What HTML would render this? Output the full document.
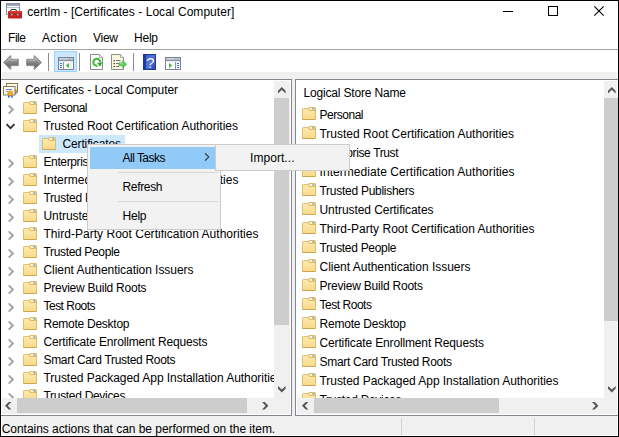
<!DOCTYPE html>
<html><head><meta charset="utf-8"><title>certlm</title>
<style>
html,body{margin:0;padding:0;background:#fff;}
body{width:619px;height:437px;position:relative;overflow:hidden;font-family:"Liberation Sans", sans-serif;}
.r{position:absolute;}
.t{position:absolute;white-space:pre;}
.ic{position:absolute;display:block;overflow:visible;}
.clip{position:absolute;overflow:hidden;}
</style></head><body>

<div class="r" style="left:0px;top:0px;width:619px;height:437px;background:#000;"></div>
<div class="r" style="left:1px;top:1px;width:617px;height:435px;background:#fff;"></div>
<svg class="ic" style="left:3px;top:2px" width="17" height="17" viewBox="0 0 17 17">
<rect x="3.5" y="1.5" width="13" height="11" fill="#fff" stroke="#8C93A3"/><rect x="4" y="2" width="12" height="2" fill="#9AA3B8"/><rect x="4" y="5" width="12" height="1" fill="#B8BFCE"/>
<path d="M7.5 10V9Q7.500 7.500 9 7.500H12Q13.500 7.500 13.500 9V10" fill="none" stroke="#333" stroke-width="1"/>
<rect x="5" y="9" width="14" height="7.500" rx=".8" fill="#C8201E"/><rect x="5.500" y="9.300" width="13" height="1.400" fill="#E0403A"/>
<rect x="8" y="11.500" width="1.500" height="2.500" fill="#ddd" stroke="#555" stroke-width=".4"/><rect x="14" y="11.500" width="1.500" height="2.500" fill="#ddd" stroke="#555" stroke-width=".4"/>
</svg>
<span class="t" style="left:27.3px;top:5.84px;font-size:12px;line-height:12px;color:#000;letter-spacing:0.041px;">certlm - [Certificates - Local Computer]</span>
<div class="r" style="left:503px;top:11px;width:10px;height:1px;background:#000;"></div>
<div class="r" style="left:548px;top:6px;width:8px;height:8px;border:1px solid #000"></div>
<svg class="ic" style="left:594px;top:6px" width="10" height="10" viewBox="0 0 10 10"><path d="M.3 .3L9.700 9.700M9.700 .3L.3 9.700" stroke="#000" stroke-width="1.1" fill="none"/></svg>
<span class="t" style="left:8px;top:32.34px;font-size:12px;line-height:12px;color:#000;letter-spacing:-0.449px;">File</span>
<span class="t" style="left:42px;top:32.34px;font-size:12px;line-height:12px;color:#000;letter-spacing:0.328px;">Action</span>
<span class="t" style="left:93px;top:32.34px;font-size:12px;line-height:12px;color:#000;letter-spacing:-0.266px;">View</span>
<span class="t" style="left:134px;top:32.34px;font-size:12px;line-height:12px;color:#000;letter-spacing:-0.230px;">Help</span>
<div class="r" style="left:1px;top:49px;width:617px;height:1px;background:#A0A0A0;"></div>
<div class="r" style="left:2px;top:72px;width:615px;height:7px;background:#F0F0F0;"></div>
<svg class="ic" style="left:3px;top:55px" width="16" height="15" viewBox="0 0 16 15"><defs><linearGradient id="ga" x1="0" y1="0" x2="0" y2="1"><stop offset="0" stop-color="#B8B8B8"/><stop offset=".45" stop-color="#8A8A8A"/><stop offset=".75" stop-color="#6E6E6E"/><stop offset="1" stop-color="#A8A8A8"/></linearGradient></defs><path d="M.6 7.400L7.400 .7H7.800V4.300H15.300V10.600H7.800V14.300H7.400z" fill="url(#ga)" stroke="#838383" stroke-width=".9" stroke-linejoin="round"/><path d="M2.300 7.400L6.800 3V5.300H14.300" fill="none" stroke="#C4C4C4" stroke-width=".7"/></svg>
<svg class="ic" style="left:26px;top:55px" width="16" height="15" viewBox="0 0 16 15"><path d="M15.400 7.400L8.600 .7H8.200V4.300H.7V10.600H8.200V14.300H8.600z" fill="url(#ga)" stroke="#838383" stroke-width=".9" stroke-linejoin="round"/><path d="M13.700 7.400L9.200 3V5.300H1.700" fill="none" stroke="#C4C4C4" stroke-width=".7"/></svg>
<div class="r" style="left:48px;top:53px;width:1px;height:18px;background:#8D8D8D;"></div>
<div class="r" style="left:54px;top:51px;width:21px;height:19px;background:#CCE8FF;border:1px solid #99D1FF"></div>
<svg class="ic" style="left:58px;top:57px" width="16" height="13" viewBox="0 0 16 13"><rect x=".5" y=".5" width="15" height="12" fill="#fff" stroke="#7B8494"/><rect x="1" y="1" width="14" height="2" fill="#A3ABBB"/><rect x="1.500" y="1.300" width="9" height="1.100" fill="#E4E7EE"/><rect x="11.500" y="1.300" width="1" height="1.100" fill="#F0F2F6"/><rect x="13.500" y="1.300" width="1" height="1.100" fill="#F0F2F6"/><rect x="1" y="3" width="14" height="1" fill="#8A93A5"/><rect x="1" y="4" width="14" height="1" fill="#E6E9EF"/><rect x="1" y="5" width="4" height="7" fill="#F1F4F9"/><rect x="5" y="5" width="1" height="7" fill="#8A93A5"/><rect x="12" y="5" width="2" height="7" fill="#F0F0F0"/><rect x="2" y="6" width="2" height="1" fill="#3A78D8"/><rect x="2" y="8" width="2" height="1" fill="#3A78D8"/><rect x="2" y="10" width="2" height="1" fill="#3A78D8"/><path d="M11 5.800V11.200L7.800 8.500z" fill="#4DB84D"/></svg>
<div class="r" style="left:79px;top:53px;width:1px;height:18px;background:#8D8D8D;"></div>
<svg class="ic" style="left:90px;top:54px" width="13" height="16" viewBox="0 0 13 16"><path d="M.5 .5H9.500L12.500 3.500V15.500H.5z" fill="#FCFCFC" stroke="#8A8A8A"/><path d="M9.500 .5V3.500H12.500" fill="#EDEDED" stroke="#9A9A9A" stroke-width=".8"/><path d="M10.300 8.300A3.500 3.500 0 1 0 7.600 11.700" fill="none" stroke="#3DBB3D" stroke-width="2.100"/><path d="M7.200 8.800L12.300 8.600L10 12.800z" fill="#23A823"/></svg>
<svg class="ic" style="left:111px;top:54px" width="16" height="16" viewBox="0 0 16 16"><path d="M.5 .5H9.500L12.500 3.500V15.500H.5z" fill="#FCF8E0" stroke="#8E8E86"/><path d="M9.500 .5V3.500H12.500" fill="#F4F4F4" stroke="#9C9C94" stroke-width=".8"/><rect x="2.600" y="6" width="1.200" height="1.200" fill="#222"/><rect x="5" y="6" width="4.500" height="1" fill="#6F6FA6"/><rect x="2.600" y="9" width="1.200" height="1.200" fill="#222"/><rect x="5" y="9" width="3" height="1" fill="#6F6FA6"/><rect x="2.600" y="12" width="1.200" height="1.200" fill="#222"/><rect x="5" y="12" width="3" height="1" fill="#6F6FA6"/><path d="M7.800 8.800H11.600V6.600L15.800 10.300L11.600 14V11.800H7.800z" fill="#5CCB5C" stroke="#3DB03D" stroke-width=".5"/><path d="M8.600 9.800H12.300" stroke="#A8E8A8" stroke-width=".8"/></svg>
<div class="r" style="left:133px;top:53px;width:1px;height:18px;background:#8D8D8D;"></div>
<svg class="ic" style="left:143px;top:54px" width="13" height="16" viewBox="0 0 13 16"><defs><linearGradient id="gh" x1="0" y1="0" x2="1" y2="1"><stop offset="0" stop-color="#3A5FD0"/><stop offset=".55" stop-color="#5078E0"/><stop offset="1" stop-color="#2443AE"/></linearGradient></defs><rect x=".5" y=".5" width="12" height="15" fill="url(#gh)" stroke="#1E3796"/><rect x="1" y="1" width="2" height="14" fill="#223C9E"/><text x="7.800" y="14" font-family="Liberation Sans, sans-serif" font-size="15" fill="#1B2F7A" text-anchor="middle">?</text><text x="7.300" y="13.500" font-family="Liberation Sans, sans-serif" font-size="15" fill="#fff" text-anchor="middle">?</text></svg>
<svg class="ic" style="left:165px;top:57px" width="16" height="13" viewBox="0 0 16 13"><rect x=".5" y=".5" width="15" height="12" fill="#fff" stroke="#7B8494"/><rect x="1" y="1" width="14" height="2" fill="#A3ABBB"/><rect x="1.500" y="1.300" width="9" height="1.100" fill="#E4E7EE"/><rect x="11.500" y="1.300" width="1" height="1.100" fill="#F0F2F6"/><rect x="13.500" y="1.300" width="1" height="1.100" fill="#F0F2F6"/><rect x="1" y="3" width="14" height="1" fill="#8A93A5"/><rect x="1" y="4" width="14" height="1" fill="#E6E9EF"/><rect x="11" y="5" width="4" height="7" fill="#F1F4F9"/><rect x="10" y="5" width="1" height="7" fill="#8A93A5"/><rect x="12" y="6" width="2" height="1" fill="#3A78D8"/><rect x="12" y="8" width="2" height="1" fill="#3A78D8"/><rect x="12" y="10" width="2" height="1" fill="#3A78D8"/><path d="M4 5.800V11.200L7.200 8.500z" fill="#4DB84D"/></svg>
<div class="r" style="left:1px;top:79px;width:291px;height:337px;background:#828790;"></div>
<div class="r" style="left:1px;top:80px;width:290px;height:335px;background:#fff;"></div>
<div class="r" style="left:295px;top:79px;width:323px;height:337px;background:#828790;"></div>
<div class="r" style="left:296px;top:80px;width:322px;height:335px;background:#fff;"></div>
<div class="r" style="left:292px;top:79px;width:3px;height:337px;background:#F0F0F0;"></div>
<div class="clip" style="left:2px;top:81px;width:272px;height:317px">
<svg class="ic" style="left:1px;top:2px" width="16" height="17" viewBox="0 0 16 17"><rect x="3.500" y=".5" width="11" height="8.500" fill="#FBF8EE" stroke="#8B7752"/><path d="M12.300 8.500V11.300L12.900 10.800L13.500 11.300V8.500z" fill="#2A63E0"/><circle cx="12.900" cy="7.600" r="1.300" fill="#F0A624"/><rect x=".5" y="3.500" width="11.500" height="8.500" fill="#FDFCF6" stroke="#8B7752"/><rect x="3" y="6" width="6" height="1" fill="#7486D6"/><rect x="3" y="8" width="2" height="1" fill="#9AA8E0"/><path d="M5.200 11.500L4.800 15.300L6.300 14.300L7.300 12z" fill="#1F5FE8"/><path d="M9.400 11.500L9.800 15.300L8.300 14.300L7.300 12z" fill="#1F5FE8"/><circle cx="7.300" cy="10.200" r="2.500" fill="#F3AE22" stroke="#D49016" stroke-width=".6"/></svg>
<span class="t" style="left:23px;top:2.84px;font-size:12px;line-height:12px;color:#000;letter-spacing:-0.086px;">Certificates - Local Computer</span>
<svg class="ic" style="left:21px;top:20px" width="14" height="13" viewBox="0 0 14 13"><defs><linearGradient id="fg1" x1="0" y1="0" x2="0" y2="1"><stop offset="0" stop-color="#FDE9AF"/><stop offset="1" stop-color="#F8D987"/></linearGradient></defs><path d="M6.5 3.5V1.2Q6.5 .5 7.2 .5H12.8Q13.5 .5 13.5 1.2V4.5H6.5z" fill="#F5D98E" stroke="#D6B15C" stroke-width=".85"/><rect x="7.6" y="1.3" width="3" height="1.2" fill="#fff"/><rect x="10.4" y="1.3" width="1.8" height="1.2" fill="#4D9BE8"/><path d="M.5 2.2Q.5 1.5 1.2 1.5H5.6L7.3 3.5H13.5V12.5H.5z" fill="url(#fg1)" stroke="#D9B560" stroke-width=".85"/><path d="M.5 12.500H13.500" stroke="#C9A24E" stroke-width=".85"/></svg>
<svg class="ic" style="left:5px;top:23px" width="7" height="11" viewBox="0 0 7 11"><path d="M1.700 1.300L5.900 5.500L1.700 9.700" fill="none" stroke="#A2A2A2" stroke-width="1.900"/></svg>
<span class="t" style="left:41.5px;top:20.84px;font-size:12px;line-height:12px;color:#000;letter-spacing:-0.482px;">Personal</span>
<svg class="ic" style="left:21px;top:38px" width="14" height="13" viewBox="0 0 14 13"><defs><linearGradient id="fg2" x1="0" y1="0" x2="0" y2="1"><stop offset="0" stop-color="#FDE9AF"/><stop offset="1" stop-color="#F8D987"/></linearGradient></defs><path d="M6.5 3.5V1.2Q6.5 .5 7.2 .5H12.8Q13.5 .5 13.5 1.2V4.5H6.5z" fill="#F5D98E" stroke="#D6B15C" stroke-width=".85"/><rect x="7.6" y="1.3" width="3" height="1.2" fill="#fff"/><rect x="10.4" y="1.3" width="1.8" height="1.2" fill="#4D9BE8"/><path d="M.5 2.2Q.5 1.5 1.2 1.5H5.6L7.3 3.5H13.5V12.5H.5z" fill="url(#fg2)" stroke="#D9B560" stroke-width=".85"/><path d="M.5 12.500H13.500" stroke="#C9A24E" stroke-width=".85"/></svg>
<svg class="ic" style="left:3px;top:42.2px" width="11" height="7" viewBox="0 0 11 7"><path d="M1.500 1.200L5.500 5.200L9.500 1.200" fill="none" stroke="#333" stroke-width="1.900"/></svg>
<span class="t" style="left:41.5px;top:38.84px;font-size:12px;line-height:12px;color:#000;letter-spacing:-0.013px;">Trusted Root Certification Authorities</span>
<div class="r" style="left:37px;top:54px;width:86px;height:18px;background:#CCE8FF;"></div>
<svg class="ic" style="left:40px;top:56px" width="14" height="13" viewBox="0 0 14 13"><defs><linearGradient id="fg3" x1="0" y1="0" x2="0" y2="1"><stop offset="0" stop-color="#FDE9AF"/><stop offset="1" stop-color="#F8D987"/></linearGradient></defs><path d="M6.5 3.5V1.2Q6.5 .5 7.2 .5H12.8Q13.5 .5 13.5 1.2V4.5H6.5z" fill="#F5D98E" stroke="#D6B15C" stroke-width=".85"/><rect x="7.6" y="1.3" width="3" height="1.2" fill="#fff"/><rect x="10.4" y="1.3" width="1.8" height="1.2" fill="#4D9BE8"/><path d="M.5 2.2Q.5 1.5 1.2 1.5H5.6L7.3 3.5H13.5V12.5H.5z" fill="url(#fg3)" stroke="#D9B560" stroke-width=".85"/><path d="M.5 12.500H13.500" stroke="#C9A24E" stroke-width=".85"/></svg>
<span class="t" style="left:60.5px;top:56.84px;font-size:12px;line-height:12px;color:#000;letter-spacing:-0.139px;">Certificates</span>
<svg class="ic" style="left:21px;top:74px" width="14" height="13" viewBox="0 0 14 13"><defs><linearGradient id="fg4" x1="0" y1="0" x2="0" y2="1"><stop offset="0" stop-color="#FDE9AF"/><stop offset="1" stop-color="#F8D987"/></linearGradient></defs><path d="M6.5 3.5V1.2Q6.5 .5 7.2 .5H12.8Q13.5 .5 13.5 1.2V4.5H6.5z" fill="#F5D98E" stroke="#D6B15C" stroke-width=".85"/><rect x="7.6" y="1.3" width="3" height="1.2" fill="#fff"/><rect x="10.4" y="1.3" width="1.8" height="1.2" fill="#4D9BE8"/><path d="M.5 2.2Q.5 1.5 1.2 1.5H5.6L7.3 3.5H13.5V12.5H.5z" fill="url(#fg4)" stroke="#D9B560" stroke-width=".85"/><path d="M.5 12.500H13.500" stroke="#C9A24E" stroke-width=".85"/></svg>
<svg class="ic" style="left:5px;top:77px" width="7" height="11" viewBox="0 0 7 11"><path d="M1.700 1.300L5.900 5.500L1.700 9.700" fill="none" stroke="#A2A2A2" stroke-width="1.900"/></svg>
<span class="t" style="left:41.5px;top:74.84px;font-size:12px;line-height:12px;color:#000;letter-spacing:-0.380px;">Enterprise Trust</span>
<svg class="ic" style="left:21px;top:92px" width="14" height="13" viewBox="0 0 14 13"><defs><linearGradient id="fg5" x1="0" y1="0" x2="0" y2="1"><stop offset="0" stop-color="#FDE9AF"/><stop offset="1" stop-color="#F8D987"/></linearGradient></defs><path d="M6.5 3.5V1.2Q6.5 .5 7.2 .5H12.8Q13.5 .5 13.5 1.2V4.5H6.5z" fill="#F5D98E" stroke="#D6B15C" stroke-width=".85"/><rect x="7.6" y="1.3" width="3" height="1.2" fill="#fff"/><rect x="10.4" y="1.3" width="1.8" height="1.2" fill="#4D9BE8"/><path d="M.5 2.2Q.5 1.5 1.2 1.5H5.6L7.3 3.5H13.5V12.5H.5z" fill="url(#fg5)" stroke="#D9B560" stroke-width=".85"/><path d="M.5 12.500H13.500" stroke="#C9A24E" stroke-width=".85"/></svg>
<svg class="ic" style="left:5px;top:95px" width="7" height="11" viewBox="0 0 7 11"><path d="M1.700 1.300L5.900 5.500L1.700 9.700" fill="none" stroke="#A2A2A2" stroke-width="1.900"/></svg>
<span class="t" style="left:41.5px;top:92.84px;font-size:12px;line-height:12px;color:#000;letter-spacing:0.060px;">Intermediate Certification Authorities</span>
<svg class="ic" style="left:21px;top:110px" width="14" height="13" viewBox="0 0 14 13"><defs><linearGradient id="fg6" x1="0" y1="0" x2="0" y2="1"><stop offset="0" stop-color="#FDE9AF"/><stop offset="1" stop-color="#F8D987"/></linearGradient></defs><path d="M6.5 3.5V1.2Q6.5 .5 7.2 .5H12.8Q13.5 .5 13.5 1.2V4.5H6.5z" fill="#F5D98E" stroke="#D6B15C" stroke-width=".85"/><rect x="7.6" y="1.3" width="3" height="1.2" fill="#fff"/><rect x="10.4" y="1.3" width="1.8" height="1.2" fill="#4D9BE8"/><path d="M.5 2.2Q.5 1.5 1.2 1.5H5.6L7.3 3.5H13.5V12.5H.5z" fill="url(#fg6)" stroke="#D9B560" stroke-width=".85"/><path d="M.5 12.500H13.500" stroke="#C9A24E" stroke-width=".85"/></svg>
<svg class="ic" style="left:5px;top:113px" width="7" height="11" viewBox="0 0 7 11"><path d="M1.700 1.300L5.900 5.500L1.700 9.700" fill="none" stroke="#A2A2A2" stroke-width="1.900"/></svg>
<span class="t" style="left:41.5px;top:110.84px;font-size:12px;line-height:12px;color:#000;letter-spacing:-0.271px;">Trusted Publishers</span>
<svg class="ic" style="left:21px;top:128px" width="14" height="13" viewBox="0 0 14 13"><defs><linearGradient id="fg7" x1="0" y1="0" x2="0" y2="1"><stop offset="0" stop-color="#FDE9AF"/><stop offset="1" stop-color="#F8D987"/></linearGradient></defs><path d="M6.5 3.5V1.2Q6.5 .5 7.2 .5H12.8Q13.5 .5 13.5 1.2V4.5H6.5z" fill="#F5D98E" stroke="#D6B15C" stroke-width=".85"/><rect x="7.6" y="1.3" width="3" height="1.2" fill="#fff"/><rect x="10.4" y="1.3" width="1.8" height="1.2" fill="#4D9BE8"/><path d="M.5 2.2Q.5 1.5 1.2 1.5H5.6L7.3 3.5H13.5V12.5H.5z" fill="url(#fg7)" stroke="#D9B560" stroke-width=".85"/><path d="M.5 12.500H13.500" stroke="#C9A24E" stroke-width=".85"/></svg>
<svg class="ic" style="left:5px;top:131px" width="7" height="11" viewBox="0 0 7 11"><path d="M1.700 1.300L5.900 5.500L1.700 9.700" fill="none" stroke="#A2A2A2" stroke-width="1.900"/></svg>
<span class="t" style="left:41.5px;top:128.84px;font-size:12px;line-height:12px;color:#000;letter-spacing:-0.066px;">Untrusted Certificates</span>
<svg class="ic" style="left:21px;top:146px" width="14" height="13" viewBox="0 0 14 13"><defs><linearGradient id="fg8" x1="0" y1="0" x2="0" y2="1"><stop offset="0" stop-color="#FDE9AF"/><stop offset="1" stop-color="#F8D987"/></linearGradient></defs><path d="M6.5 3.5V1.2Q6.5 .5 7.2 .5H12.8Q13.5 .5 13.5 1.2V4.5H6.5z" fill="#F5D98E" stroke="#D6B15C" stroke-width=".85"/><rect x="7.6" y="1.3" width="3" height="1.2" fill="#fff"/><rect x="10.4" y="1.3" width="1.8" height="1.2" fill="#4D9BE8"/><path d="M.5 2.2Q.5 1.5 1.2 1.5H5.6L7.3 3.5H13.5V12.5H.5z" fill="url(#fg8)" stroke="#D9B560" stroke-width=".85"/><path d="M.5 12.500H13.500" stroke="#C9A24E" stroke-width=".85"/></svg>
<svg class="ic" style="left:5px;top:149px" width="7" height="11" viewBox="0 0 7 11"><path d="M1.700 1.300L5.900 5.500L1.700 9.700" fill="none" stroke="#A2A2A2" stroke-width="1.900"/></svg>
<span class="t" style="left:41.5px;top:146.84px;font-size:12px;line-height:12px;color:#000;letter-spacing:0.022px;">Third-Party Root Certification Authorities</span>
<svg class="ic" style="left:21px;top:164px" width="14" height="13" viewBox="0 0 14 13"><defs><linearGradient id="fg9" x1="0" y1="0" x2="0" y2="1"><stop offset="0" stop-color="#FDE9AF"/><stop offset="1" stop-color="#F8D987"/></linearGradient></defs><path d="M6.5 3.5V1.2Q6.5 .5 7.2 .5H12.8Q13.5 .5 13.5 1.2V4.5H6.5z" fill="#F5D98E" stroke="#D6B15C" stroke-width=".85"/><rect x="7.6" y="1.3" width="3" height="1.2" fill="#fff"/><rect x="10.4" y="1.3" width="1.8" height="1.2" fill="#4D9BE8"/><path d="M.5 2.2Q.5 1.5 1.2 1.5H5.6L7.3 3.5H13.5V12.5H.5z" fill="url(#fg9)" stroke="#D9B560" stroke-width=".85"/><path d="M.5 12.500H13.500" stroke="#C9A24E" stroke-width=".85"/></svg>
<svg class="ic" style="left:5px;top:167px" width="7" height="11" viewBox="0 0 7 11"><path d="M1.700 1.300L5.900 5.500L1.700 9.700" fill="none" stroke="#A2A2A2" stroke-width="1.900"/></svg>
<span class="t" style="left:41.5px;top:164.84px;font-size:12px;line-height:12px;color:#000;letter-spacing:-0.342px;">Trusted People</span>
<svg class="ic" style="left:21px;top:182px" width="14" height="13" viewBox="0 0 14 13"><defs><linearGradient id="fg10" x1="0" y1="0" x2="0" y2="1"><stop offset="0" stop-color="#FDE9AF"/><stop offset="1" stop-color="#F8D987"/></linearGradient></defs><path d="M6.5 3.5V1.2Q6.5 .5 7.2 .5H12.8Q13.5 .5 13.5 1.2V4.5H6.5z" fill="#F5D98E" stroke="#D6B15C" stroke-width=".85"/><rect x="7.6" y="1.3" width="3" height="1.2" fill="#fff"/><rect x="10.4" y="1.3" width="1.8" height="1.2" fill="#4D9BE8"/><path d="M.5 2.2Q.5 1.5 1.2 1.5H5.6L7.3 3.5H13.5V12.5H.5z" fill="url(#fg10)" stroke="#D9B560" stroke-width=".85"/><path d="M.5 12.500H13.500" stroke="#C9A24E" stroke-width=".85"/></svg>
<svg class="ic" style="left:5px;top:185px" width="7" height="11" viewBox="0 0 7 11"><path d="M1.700 1.300L5.900 5.500L1.700 9.700" fill="none" stroke="#A2A2A2" stroke-width="1.900"/></svg>
<span class="t" style="left:41.5px;top:182.84px;font-size:12px;line-height:12px;color:#000;letter-spacing:-0.051px;">Client Authentication Issuers</span>
<svg class="ic" style="left:21px;top:200px" width="14" height="13" viewBox="0 0 14 13"><defs><linearGradient id="fg11" x1="0" y1="0" x2="0" y2="1"><stop offset="0" stop-color="#FDE9AF"/><stop offset="1" stop-color="#F8D987"/></linearGradient></defs><path d="M6.5 3.5V1.2Q6.5 .5 7.2 .5H12.8Q13.5 .5 13.5 1.2V4.5H6.5z" fill="#F5D98E" stroke="#D6B15C" stroke-width=".85"/><rect x="7.6" y="1.3" width="3" height="1.2" fill="#fff"/><rect x="10.4" y="1.3" width="1.8" height="1.2" fill="#4D9BE8"/><path d="M.5 2.2Q.5 1.5 1.2 1.5H5.6L7.3 3.5H13.5V12.5H.5z" fill="url(#fg11)" stroke="#D9B560" stroke-width=".85"/><path d="M.5 12.500H13.500" stroke="#C9A24E" stroke-width=".85"/></svg>
<svg class="ic" style="left:5px;top:203px" width="7" height="11" viewBox="0 0 7 11"><path d="M1.700 1.300L5.900 5.500L1.700 9.700" fill="none" stroke="#A2A2A2" stroke-width="1.900"/></svg>
<span class="t" style="left:41.5px;top:200.84px;font-size:12px;line-height:12px;color:#000;letter-spacing:-0.244px;">Preview Build Roots</span>
<svg class="ic" style="left:21px;top:218px" width="14" height="13" viewBox="0 0 14 13"><defs><linearGradient id="fg12" x1="0" y1="0" x2="0" y2="1"><stop offset="0" stop-color="#FDE9AF"/><stop offset="1" stop-color="#F8D987"/></linearGradient></defs><path d="M6.5 3.5V1.2Q6.5 .5 7.2 .5H12.8Q13.5 .5 13.5 1.2V4.5H6.5z" fill="#F5D98E" stroke="#D6B15C" stroke-width=".85"/><rect x="7.6" y="1.3" width="3" height="1.2" fill="#fff"/><rect x="10.4" y="1.3" width="1.8" height="1.2" fill="#4D9BE8"/><path d="M.5 2.2Q.5 1.5 1.2 1.5H5.6L7.3 3.5H13.5V12.5H.5z" fill="url(#fg12)" stroke="#D9B560" stroke-width=".85"/><path d="M.5 12.500H13.500" stroke="#C9A24E" stroke-width=".85"/></svg>
<svg class="ic" style="left:5px;top:221px" width="7" height="11" viewBox="0 0 7 11"><path d="M1.700 1.300L5.900 5.500L1.700 9.700" fill="none" stroke="#A2A2A2" stroke-width="1.900"/></svg>
<span class="t" style="left:41.5px;top:218.84px;font-size:12px;line-height:12px;color:#000;letter-spacing:-0.522px;">Test Roots</span>
<svg class="ic" style="left:21px;top:236px" width="14" height="13" viewBox="0 0 14 13"><defs><linearGradient id="fg13" x1="0" y1="0" x2="0" y2="1"><stop offset="0" stop-color="#FDE9AF"/><stop offset="1" stop-color="#F8D987"/></linearGradient></defs><path d="M6.5 3.5V1.2Q6.5 .5 7.2 .5H12.8Q13.5 .5 13.5 1.2V4.5H6.5z" fill="#F5D98E" stroke="#D6B15C" stroke-width=".85"/><rect x="7.6" y="1.3" width="3" height="1.2" fill="#fff"/><rect x="10.4" y="1.3" width="1.8" height="1.2" fill="#4D9BE8"/><path d="M.5 2.2Q.5 1.5 1.2 1.5H5.6L7.3 3.5H13.5V12.5H.5z" fill="url(#fg13)" stroke="#D9B560" stroke-width=".85"/><path d="M.5 12.500H13.500" stroke="#C9A24E" stroke-width=".85"/></svg>
<svg class="ic" style="left:5px;top:239px" width="7" height="11" viewBox="0 0 7 11"><path d="M1.700 1.300L5.900 5.500L1.700 9.700" fill="none" stroke="#A2A2A2" stroke-width="1.900"/></svg>
<span class="t" style="left:41.5px;top:236.84px;font-size:12px;line-height:12px;color:#000;letter-spacing:-0.260px;">Remote Desktop</span>
<svg class="ic" style="left:21px;top:254px" width="14" height="13" viewBox="0 0 14 13"><defs><linearGradient id="fg14" x1="0" y1="0" x2="0" y2="1"><stop offset="0" stop-color="#FDE9AF"/><stop offset="1" stop-color="#F8D987"/></linearGradient></defs><path d="M6.5 3.5V1.2Q6.5 .5 7.2 .5H12.8Q13.5 .5 13.5 1.2V4.5H6.5z" fill="#F5D98E" stroke="#D6B15C" stroke-width=".85"/><rect x="7.6" y="1.3" width="3" height="1.2" fill="#fff"/><rect x="10.4" y="1.3" width="1.8" height="1.2" fill="#4D9BE8"/><path d="M.5 2.2Q.5 1.5 1.2 1.5H5.6L7.3 3.5H13.5V12.5H.5z" fill="url(#fg14)" stroke="#D9B560" stroke-width=".85"/><path d="M.5 12.500H13.500" stroke="#C9A24E" stroke-width=".85"/></svg>
<svg class="ic" style="left:5px;top:257px" width="7" height="11" viewBox="0 0 7 11"><path d="M1.700 1.300L5.900 5.500L1.700 9.700" fill="none" stroke="#A2A2A2" stroke-width="1.900"/></svg>
<span class="t" style="left:41.5px;top:254.84px;font-size:12px;line-height:12px;color:#000;letter-spacing:-0.158px;">Certificate Enrollment Requests</span>
<svg class="ic" style="left:21px;top:272px" width="14" height="13" viewBox="0 0 14 13"><defs><linearGradient id="fg15" x1="0" y1="0" x2="0" y2="1"><stop offset="0" stop-color="#FDE9AF"/><stop offset="1" stop-color="#F8D987"/></linearGradient></defs><path d="M6.5 3.5V1.2Q6.5 .5 7.2 .5H12.8Q13.5 .5 13.5 1.2V4.5H6.5z" fill="#F5D98E" stroke="#D6B15C" stroke-width=".85"/><rect x="7.6" y="1.3" width="3" height="1.2" fill="#fff"/><rect x="10.4" y="1.3" width="1.8" height="1.2" fill="#4D9BE8"/><path d="M.5 2.2Q.5 1.5 1.2 1.5H5.6L7.3 3.5H13.5V12.5H.5z" fill="url(#fg15)" stroke="#D9B560" stroke-width=".85"/><path d="M.5 12.500H13.500" stroke="#C9A24E" stroke-width=".85"/></svg>
<svg class="ic" style="left:5px;top:275px" width="7" height="11" viewBox="0 0 7 11"><path d="M1.700 1.300L5.900 5.500L1.700 9.700" fill="none" stroke="#A2A2A2" stroke-width="1.900"/></svg>
<span class="t" style="left:41.5px;top:272.84px;font-size:12px;line-height:12px;color:#000;letter-spacing:-0.321px;">Smart Card Trusted Roots</span>
<svg class="ic" style="left:21px;top:290px" width="14" height="13" viewBox="0 0 14 13"><defs><linearGradient id="fg16" x1="0" y1="0" x2="0" y2="1"><stop offset="0" stop-color="#FDE9AF"/><stop offset="1" stop-color="#F8D987"/></linearGradient></defs><path d="M6.5 3.5V1.2Q6.5 .5 7.2 .5H12.8Q13.5 .5 13.5 1.2V4.5H6.5z" fill="#F5D98E" stroke="#D6B15C" stroke-width=".85"/><rect x="7.6" y="1.3" width="3" height="1.2" fill="#fff"/><rect x="10.4" y="1.3" width="1.8" height="1.2" fill="#4D9BE8"/><path d="M.5 2.2Q.5 1.5 1.2 1.5H5.6L7.3 3.5H13.5V12.5H.5z" fill="url(#fg16)" stroke="#D9B560" stroke-width=".85"/><path d="M.5 12.500H13.500" stroke="#C9A24E" stroke-width=".85"/></svg>
<svg class="ic" style="left:5px;top:293px" width="7" height="11" viewBox="0 0 7 11"><path d="M1.700 1.300L5.900 5.500L1.700 9.700" fill="none" stroke="#A2A2A2" stroke-width="1.900"/></svg>
<span class="t" style="left:41.5px;top:290.84px;font-size:12px;line-height:12px;color:#000;letter-spacing:-0.047px;">Trusted Packaged App Installation Authorities</span>
<svg class="ic" style="left:21px;top:308px" width="14" height="13" viewBox="0 0 14 13"><defs><linearGradient id="fg17" x1="0" y1="0" x2="0" y2="1"><stop offset="0" stop-color="#FDE9AF"/><stop offset="1" stop-color="#F8D987"/></linearGradient></defs><path d="M6.5 3.5V1.2Q6.5 .5 7.2 .5H12.8Q13.5 .5 13.5 1.2V4.5H6.5z" fill="#F5D98E" stroke="#D6B15C" stroke-width=".85"/><rect x="7.6" y="1.3" width="3" height="1.2" fill="#fff"/><rect x="10.4" y="1.3" width="1.8" height="1.2" fill="#4D9BE8"/><path d="M.5 2.2Q.5 1.5 1.2 1.5H5.6L7.3 3.5H13.5V12.5H.5z" fill="url(#fg17)" stroke="#D9B560" stroke-width=".85"/><path d="M.5 12.500H13.500" stroke="#C9A24E" stroke-width=".85"/></svg>
<svg class="ic" style="left:5px;top:311px" width="7" height="11" viewBox="0 0 7 11"><path d="M1.700 1.300L5.900 5.500L1.700 9.700" fill="none" stroke="#A2A2A2" stroke-width="1.900"/></svg>
<span class="t" style="left:41.5px;top:308.84px;font-size:12px;line-height:12px;color:#000;letter-spacing:-0.305px;">Trusted Devices</span>
</div>
<div class="r" style="left:274px;top:81px;width:16px;height:317px;background:#F0F0F0;"></div>
<div class="r" style="left:274px;top:98px;width:15px;height:227px;background:#CDCDCD;"></div>
<svg class="ic" style="left:277.7px;top:86.7px" width="7.6" height="6.4" viewBox="0 0 7.6 6.4"><polygon points="0,3.7 3.8,0 7.6,3.7 7.6,6.4 3.8,2.8 0,6.4" fill="#555"/></svg>
<svg class="ic" style="left:277.8px;top:385.8px" width="7.6" height="6.4" viewBox="0 0 7.6 6.4"><polygon points="0,3.7 3.8,0 7.6,3.7 7.6,6.4 3.8,2.8 0,6.4" fill="#555" transform="translate(0 6.4) scale(1 -1)"/></svg>
<div class="r" style="left:2px;top:398px;width:288px;height:16px;background:#F0F0F0;"></div>
<div class="r" style="left:17px;top:398px;width:230px;height:15px;background:#CDCDCD;"></div>
<svg class="ic" style="left:4.9px;top:401.8px" width="6.4" height="7.6" viewBox="0 0 6.4 7.6"><polygon points="3.7,0 0,3.8 3.7,7.6 6.4,7.6 2.8,3.8 6.4,0" fill="#555"/></svg>
<svg class="ic" style="left:261.7px;top:401.8px" width="6.4" height="7.6" viewBox="0 0 6.4 7.6"><polygon points="3.7,0 0,3.8 3.7,7.6 6.4,7.6 2.8,3.8 6.4,0" fill="#555" transform="translate(6.4 0) scale(-1 1)"/></svg>
<div class="r" style="left:1px;top:414px;width:290px;height:1px;background:#fff;"></div>
<div class="clip" style="left:297px;top:81px;width:307px;height:317px">
<span class="t" style="left:6.5px;top:5.84px;font-size:12px;line-height:12px;color:#000;letter-spacing:-0.170px;">Logical Store Name</span>
<svg class="ic" style="left:5px;top:26px" width="14" height="13" viewBox="0 0 14 13"><defs><linearGradient id="fg18" x1="0" y1="0" x2="0" y2="1"><stop offset="0" stop-color="#FDE9AF"/><stop offset="1" stop-color="#F8D987"/></linearGradient></defs><path d="M6.5 3.5V1.2Q6.5 .5 7.2 .5H12.8Q13.5 .5 13.5 1.2V4.5H6.5z" fill="#F5D98E" stroke="#D6B15C" stroke-width=".85"/><rect x="7.6" y="1.3" width="3" height="1.2" fill="#fff"/><rect x="10.4" y="1.3" width="1.8" height="1.2" fill="#4D9BE8"/><path d="M.5 2.2Q.5 1.5 1.2 1.5H5.6L7.3 3.5H13.5V12.5H.5z" fill="url(#fg18)" stroke="#D9B560" stroke-width=".85"/><path d="M.5 12.500H13.500" stroke="#C9A24E" stroke-width=".85"/></svg>
<span class="t" style="left:22.5px;top:27.84px;font-size:12px;line-height:12px;color:#000;letter-spacing:-0.482px;">Personal</span>
<svg class="ic" style="left:5px;top:45px" width="14" height="13" viewBox="0 0 14 13"><defs><linearGradient id="fg19" x1="0" y1="0" x2="0" y2="1"><stop offset="0" stop-color="#FDE9AF"/><stop offset="1" stop-color="#F8D987"/></linearGradient></defs><path d="M6.5 3.5V1.2Q6.5 .5 7.2 .5H12.8Q13.5 .5 13.5 1.2V4.5H6.5z" fill="#F5D98E" stroke="#D6B15C" stroke-width=".85"/><rect x="7.6" y="1.3" width="3" height="1.2" fill="#fff"/><rect x="10.4" y="1.3" width="1.8" height="1.2" fill="#4D9BE8"/><path d="M.5 2.2Q.5 1.5 1.2 1.5H5.6L7.3 3.5H13.5V12.5H.5z" fill="url(#fg19)" stroke="#D9B560" stroke-width=".85"/><path d="M.5 12.500H13.500" stroke="#C9A24E" stroke-width=".85"/></svg>
<span class="t" style="left:22.5px;top:46.84px;font-size:12px;line-height:12px;color:#000;letter-spacing:-0.013px;">Trusted Root Certification Authorities</span>
<svg class="ic" style="left:5px;top:64px" width="14" height="13" viewBox="0 0 14 13"><defs><linearGradient id="fg20" x1="0" y1="0" x2="0" y2="1"><stop offset="0" stop-color="#FDE9AF"/><stop offset="1" stop-color="#F8D987"/></linearGradient></defs><path d="M6.5 3.5V1.2Q6.5 .5 7.2 .5H12.8Q13.5 .5 13.5 1.2V4.5H6.5z" fill="#F5D98E" stroke="#D6B15C" stroke-width=".85"/><rect x="7.6" y="1.3" width="3" height="1.2" fill="#fff"/><rect x="10.4" y="1.3" width="1.8" height="1.2" fill="#4D9BE8"/><path d="M.5 2.2Q.5 1.5 1.2 1.5H5.6L7.3 3.5H13.5V12.5H.5z" fill="url(#fg20)" stroke="#D9B560" stroke-width=".85"/><path d="M.5 12.500H13.500" stroke="#C9A24E" stroke-width=".85"/></svg>
<span class="t" style="left:22.5px;top:65.84px;font-size:12px;line-height:12px;color:#000;letter-spacing:-0.380px;">Enterprise Trust</span>
<svg class="ic" style="left:5px;top:83px" width="14" height="13" viewBox="0 0 14 13"><defs><linearGradient id="fg21" x1="0" y1="0" x2="0" y2="1"><stop offset="0" stop-color="#FDE9AF"/><stop offset="1" stop-color="#F8D987"/></linearGradient></defs><path d="M6.5 3.5V1.2Q6.5 .5 7.2 .5H12.8Q13.5 .5 13.5 1.2V4.5H6.5z" fill="#F5D98E" stroke="#D6B15C" stroke-width=".85"/><rect x="7.6" y="1.3" width="3" height="1.2" fill="#fff"/><rect x="10.4" y="1.3" width="1.8" height="1.2" fill="#4D9BE8"/><path d="M.5 2.2Q.5 1.5 1.2 1.5H5.6L7.3 3.5H13.5V12.5H.5z" fill="url(#fg21)" stroke="#D9B560" stroke-width=".85"/><path d="M.5 12.500H13.500" stroke="#C9A24E" stroke-width=".85"/></svg>
<span class="t" style="left:22.5px;top:84.84px;font-size:12px;line-height:12px;color:#000;letter-spacing:0.060px;">Intermediate Certification Authorities</span>
<svg class="ic" style="left:5px;top:102px" width="14" height="13" viewBox="0 0 14 13"><defs><linearGradient id="fg22" x1="0" y1="0" x2="0" y2="1"><stop offset="0" stop-color="#FDE9AF"/><stop offset="1" stop-color="#F8D987"/></linearGradient></defs><path d="M6.5 3.5V1.2Q6.5 .5 7.2 .5H12.8Q13.5 .5 13.5 1.2V4.5H6.5z" fill="#F5D98E" stroke="#D6B15C" stroke-width=".85"/><rect x="7.6" y="1.3" width="3" height="1.2" fill="#fff"/><rect x="10.4" y="1.3" width="1.8" height="1.2" fill="#4D9BE8"/><path d="M.5 2.2Q.5 1.5 1.2 1.5H5.6L7.3 3.5H13.5V12.5H.5z" fill="url(#fg22)" stroke="#D9B560" stroke-width=".85"/><path d="M.5 12.500H13.500" stroke="#C9A24E" stroke-width=".85"/></svg>
<span class="t" style="left:22.5px;top:103.84px;font-size:12px;line-height:12px;color:#000;letter-spacing:-0.271px;">Trusted Publishers</span>
<svg class="ic" style="left:5px;top:121px" width="14" height="13" viewBox="0 0 14 13"><defs><linearGradient id="fg23" x1="0" y1="0" x2="0" y2="1"><stop offset="0" stop-color="#FDE9AF"/><stop offset="1" stop-color="#F8D987"/></linearGradient></defs><path d="M6.5 3.5V1.2Q6.5 .5 7.2 .5H12.8Q13.5 .5 13.5 1.2V4.5H6.5z" fill="#F5D98E" stroke="#D6B15C" stroke-width=".85"/><rect x="7.6" y="1.3" width="3" height="1.2" fill="#fff"/><rect x="10.4" y="1.3" width="1.8" height="1.2" fill="#4D9BE8"/><path d="M.5 2.2Q.5 1.5 1.2 1.5H5.6L7.3 3.5H13.5V12.5H.5z" fill="url(#fg23)" stroke="#D9B560" stroke-width=".85"/><path d="M.5 12.500H13.500" stroke="#C9A24E" stroke-width=".85"/></svg>
<span class="t" style="left:22.5px;top:122.84px;font-size:12px;line-height:12px;color:#000;letter-spacing:-0.066px;">Untrusted Certificates</span>
<svg class="ic" style="left:5px;top:140px" width="14" height="13" viewBox="0 0 14 13"><defs><linearGradient id="fg24" x1="0" y1="0" x2="0" y2="1"><stop offset="0" stop-color="#FDE9AF"/><stop offset="1" stop-color="#F8D987"/></linearGradient></defs><path d="M6.5 3.5V1.2Q6.5 .5 7.2 .5H12.8Q13.5 .5 13.5 1.2V4.5H6.5z" fill="#F5D98E" stroke="#D6B15C" stroke-width=".85"/><rect x="7.6" y="1.3" width="3" height="1.2" fill="#fff"/><rect x="10.4" y="1.3" width="1.8" height="1.2" fill="#4D9BE8"/><path d="M.5 2.2Q.5 1.5 1.2 1.5H5.6L7.3 3.5H13.5V12.5H.5z" fill="url(#fg24)" stroke="#D9B560" stroke-width=".85"/><path d="M.5 12.500H13.500" stroke="#C9A24E" stroke-width=".85"/></svg>
<span class="t" style="left:22.5px;top:141.84px;font-size:12px;line-height:12px;color:#000;letter-spacing:0.022px;">Third-Party Root Certification Authorities</span>
<svg class="ic" style="left:5px;top:159px" width="14" height="13" viewBox="0 0 14 13"><defs><linearGradient id="fg25" x1="0" y1="0" x2="0" y2="1"><stop offset="0" stop-color="#FDE9AF"/><stop offset="1" stop-color="#F8D987"/></linearGradient></defs><path d="M6.5 3.5V1.2Q6.5 .5 7.2 .5H12.8Q13.5 .5 13.5 1.2V4.5H6.5z" fill="#F5D98E" stroke="#D6B15C" stroke-width=".85"/><rect x="7.6" y="1.3" width="3" height="1.2" fill="#fff"/><rect x="10.4" y="1.3" width="1.8" height="1.2" fill="#4D9BE8"/><path d="M.5 2.2Q.5 1.5 1.2 1.5H5.6L7.3 3.5H13.5V12.5H.5z" fill="url(#fg25)" stroke="#D9B560" stroke-width=".85"/><path d="M.5 12.500H13.500" stroke="#C9A24E" stroke-width=".85"/></svg>
<span class="t" style="left:22.5px;top:160.84px;font-size:12px;line-height:12px;color:#000;letter-spacing:-0.303px;">Trusted People</span>
<svg class="ic" style="left:5px;top:178px" width="14" height="13" viewBox="0 0 14 13"><defs><linearGradient id="fg26" x1="0" y1="0" x2="0" y2="1"><stop offset="0" stop-color="#FDE9AF"/><stop offset="1" stop-color="#F8D987"/></linearGradient></defs><path d="M6.5 3.5V1.2Q6.5 .5 7.2 .5H12.8Q13.5 .5 13.5 1.2V4.5H6.5z" fill="#F5D98E" stroke="#D6B15C" stroke-width=".85"/><rect x="7.6" y="1.3" width="3" height="1.2" fill="#fff"/><rect x="10.4" y="1.3" width="1.8" height="1.2" fill="#4D9BE8"/><path d="M.5 2.2Q.5 1.5 1.2 1.5H5.6L7.3 3.5H13.5V12.5H.5z" fill="url(#fg26)" stroke="#D9B560" stroke-width=".85"/><path d="M.5 12.500H13.500" stroke="#C9A24E" stroke-width=".85"/></svg>
<span class="t" style="left:22.5px;top:179.84px;font-size:12px;line-height:12px;color:#000;letter-spacing:-0.015px;">Client Authentication Issuers</span>
<svg class="ic" style="left:5px;top:197px" width="14" height="13" viewBox="0 0 14 13"><defs><linearGradient id="fg27" x1="0" y1="0" x2="0" y2="1"><stop offset="0" stop-color="#FDE9AF"/><stop offset="1" stop-color="#F8D987"/></linearGradient></defs><path d="M6.5 3.5V1.2Q6.5 .5 7.2 .5H12.8Q13.5 .5 13.5 1.2V4.5H6.5z" fill="#F5D98E" stroke="#D6B15C" stroke-width=".85"/><rect x="7.6" y="1.3" width="3" height="1.2" fill="#fff"/><rect x="10.4" y="1.3" width="1.8" height="1.2" fill="#4D9BE8"/><path d="M.5 2.2Q.5 1.5 1.2 1.5H5.6L7.3 3.5H13.5V12.5H.5z" fill="url(#fg27)" stroke="#D9B560" stroke-width=".85"/><path d="M.5 12.500H13.500" stroke="#C9A24E" stroke-width=".85"/></svg>
<span class="t" style="left:22.5px;top:198.84px;font-size:12px;line-height:12px;color:#000;letter-spacing:-0.216px;">Preview Build Roots</span>
<svg class="ic" style="left:5px;top:216px" width="14" height="13" viewBox="0 0 14 13"><defs><linearGradient id="fg28" x1="0" y1="0" x2="0" y2="1"><stop offset="0" stop-color="#FDE9AF"/><stop offset="1" stop-color="#F8D987"/></linearGradient></defs><path d="M6.5 3.5V1.2Q6.5 .5 7.2 .5H12.8Q13.5 .5 13.5 1.2V4.5H6.5z" fill="#F5D98E" stroke="#D6B15C" stroke-width=".85"/><rect x="7.6" y="1.3" width="3" height="1.2" fill="#fff"/><rect x="10.4" y="1.3" width="1.8" height="1.2" fill="#4D9BE8"/><path d="M.5 2.2Q.5 1.5 1.2 1.5H5.6L7.3 3.5H13.5V12.5H.5z" fill="url(#fg28)" stroke="#D9B560" stroke-width=".85"/><path d="M.5 12.500H13.500" stroke="#C9A24E" stroke-width=".85"/></svg>
<span class="t" style="left:22.5px;top:217.84px;font-size:12px;line-height:12px;color:#000;letter-spacing:-0.467px;">Test Roots</span>
<svg class="ic" style="left:5px;top:235px" width="14" height="13" viewBox="0 0 14 13"><defs><linearGradient id="fg29" x1="0" y1="0" x2="0" y2="1"><stop offset="0" stop-color="#FDE9AF"/><stop offset="1" stop-color="#F8D987"/></linearGradient></defs><path d="M6.5 3.5V1.2Q6.5 .5 7.2 .5H12.8Q13.5 .5 13.5 1.2V4.5H6.5z" fill="#F5D98E" stroke="#D6B15C" stroke-width=".85"/><rect x="7.6" y="1.3" width="3" height="1.2" fill="#fff"/><rect x="10.4" y="1.3" width="1.8" height="1.2" fill="#4D9BE8"/><path d="M.5 2.2Q.5 1.5 1.2 1.5H5.6L7.3 3.5H13.5V12.5H.5z" fill="url(#fg29)" stroke="#D9B560" stroke-width=".85"/><path d="M.5 12.500H13.500" stroke="#C9A24E" stroke-width=".85"/></svg>
<span class="t" style="left:22.5px;top:236.84px;font-size:12px;line-height:12px;color:#000;letter-spacing:-0.221px;">Remote Desktop</span>
<svg class="ic" style="left:5px;top:254px" width="14" height="13" viewBox="0 0 14 13"><defs><linearGradient id="fg30" x1="0" y1="0" x2="0" y2="1"><stop offset="0" stop-color="#FDE9AF"/><stop offset="1" stop-color="#F8D987"/></linearGradient></defs><path d="M6.5 3.5V1.2Q6.5 .5 7.2 .5H12.8Q13.5 .5 13.5 1.2V4.5H6.5z" fill="#F5D98E" stroke="#D6B15C" stroke-width=".85"/><rect x="7.6" y="1.3" width="3" height="1.2" fill="#fff"/><rect x="10.4" y="1.3" width="1.8" height="1.2" fill="#4D9BE8"/><path d="M.5 2.2Q.5 1.5 1.2 1.5H5.6L7.3 3.5H13.5V12.5H.5z" fill="url(#fg30)" stroke="#D9B560" stroke-width=".85"/><path d="M.5 12.500H13.500" stroke="#C9A24E" stroke-width=".85"/></svg>
<span class="t" style="left:22.5px;top:255.84px;font-size:12px;line-height:12px;color:#000;letter-spacing:-0.142px;">Certificate Enrollment Requests</span>
<svg class="ic" style="left:5px;top:273px" width="14" height="13" viewBox="0 0 14 13"><defs><linearGradient id="fg31" x1="0" y1="0" x2="0" y2="1"><stop offset="0" stop-color="#FDE9AF"/><stop offset="1" stop-color="#F8D987"/></linearGradient></defs><path d="M6.5 3.5V1.2Q6.5 .5 7.2 .5H12.8Q13.5 .5 13.5 1.2V4.5H6.5z" fill="#F5D98E" stroke="#D6B15C" stroke-width=".85"/><rect x="7.6" y="1.3" width="3" height="1.2" fill="#fff"/><rect x="10.4" y="1.3" width="1.8" height="1.2" fill="#4D9BE8"/><path d="M.5 2.2Q.5 1.5 1.2 1.5H5.6L7.3 3.5H13.5V12.5H.5z" fill="url(#fg31)" stroke="#D9B560" stroke-width=".85"/><path d="M.5 12.500H13.500" stroke="#C9A24E" stroke-width=".85"/></svg>
<span class="t" style="left:22.5px;top:274.84px;font-size:12px;line-height:12px;color:#000;letter-spacing:-0.299px;">Smart Card Trusted Roots</span>
<svg class="ic" style="left:5px;top:292px" width="14" height="13" viewBox="0 0 14 13"><defs><linearGradient id="fg32" x1="0" y1="0" x2="0" y2="1"><stop offset="0" stop-color="#FDE9AF"/><stop offset="1" stop-color="#F8D987"/></linearGradient></defs><path d="M6.5 3.5V1.2Q6.5 .5 7.2 .5H12.8Q13.5 .5 13.5 1.2V4.5H6.5z" fill="#F5D98E" stroke="#D6B15C" stroke-width=".85"/><rect x="7.6" y="1.3" width="3" height="1.2" fill="#fff"/><rect x="10.4" y="1.3" width="1.8" height="1.2" fill="#4D9BE8"/><path d="M.5 2.2Q.5 1.5 1.2 1.5H5.6L7.3 3.5H13.5V12.5H.5z" fill="url(#fg32)" stroke="#D9B560" stroke-width=".85"/><path d="M.5 12.500H13.500" stroke="#C9A24E" stroke-width=".85"/></svg>
<span class="t" style="left:22.5px;top:293.84px;font-size:12px;line-height:12px;color:#000;letter-spacing:-0.047px;">Trusted Packaged App Installation Authorities</span>
<svg class="ic" style="left:5px;top:311px" width="14" height="13" viewBox="0 0 14 13"><defs><linearGradient id="fg33" x1="0" y1="0" x2="0" y2="1"><stop offset="0" stop-color="#FDE9AF"/><stop offset="1" stop-color="#F8D987"/></linearGradient></defs><path d="M6.5 3.5V1.2Q6.5 .5 7.2 .5H12.8Q13.5 .5 13.5 1.2V4.5H6.5z" fill="#F5D98E" stroke="#D6B15C" stroke-width=".85"/><rect x="7.6" y="1.3" width="3" height="1.2" fill="#fff"/><rect x="10.4" y="1.3" width="1.8" height="1.2" fill="#4D9BE8"/><path d="M.5 2.2Q.5 1.5 1.2 1.5H5.6L7.3 3.5H13.5V12.5H.5z" fill="url(#fg33)" stroke="#D9B560" stroke-width=".85"/><path d="M.5 12.500H13.500" stroke="#C9A24E" stroke-width=".85"/></svg>
<span class="t" style="left:22.5px;top:312.84px;font-size:12px;line-height:12px;color:#000;letter-spacing:-0.305px;">Trusted Devices</span>
</div>
<div class="r" style="left:604px;top:81px;width:13px;height:317px;background:#F0F0F0;"></div>
<div class="r" style="left:604px;top:98px;width:14px;height:223px;background:#CDCDCD;"></div>
<svg class="ic" style="left:607.8px;top:86.8px" width="7.6" height="6.4" viewBox="0 0 7.6 6.4"><polygon points="0,3.7 3.8,0 7.6,3.7 7.6,6.4 3.8,2.8 0,6.4" fill="#555"/></svg>
<svg class="ic" style="left:607.8px;top:385.8px" width="7.6" height="6.4" viewBox="0 0 7.6 6.4"><polygon points="0,3.7 3.8,0 7.6,3.7 7.6,6.4 3.8,2.8 0,6.4" fill="#555" transform="translate(0 6.4) scale(1 -1)"/></svg>
<div class="r" style="left:297px;top:398px;width:320px;height:16px;background:#F0F0F0;"></div>
<div class="r" style="left:314px;top:398px;width:185px;height:15px;background:#CDCDCD;"></div>
<svg class="ic" style="left:302px;top:401.8px" width="6.4" height="7.6" viewBox="0 0 6.4 7.6"><polygon points="3.7,0 0,3.8 3.7,7.6 6.4,7.6 2.8,3.8 6.4,0" fill="#555"/></svg>
<svg class="ic" style="left:592px;top:401.8px" width="6.4" height="7.6" viewBox="0 0 6.4 7.6"><polygon points="3.7,0 0,3.8 3.7,7.6 6.4,7.6 2.8,3.8 6.4,0" fill="#555" transform="translate(6.4 0) scale(-1 1)"/></svg>
<div class="r" style="left:296px;top:414px;width:322px;height:1px;background:#fff;"></div>
<div class="r" style="left:2px;top:416px;width:615px;height:19px;background:#F0F0F0;"></div>
<span class="t" style="left:1.7px;top:422.84px;font-size:12px;line-height:12px;color:#000;letter-spacing:-0.040px;">Contains actions that can be performed on the item.</span>
<div class="r" style="left:401px;top:418px;width:1px;height:18px;background:#D2D2D2;"></div>
<div class="r" style="left:534px;top:418px;width:1px;height:18px;background:#D2D2D2;"></div>
<div class="r" style="left:87px;top:144px;width:132px;height:84px;background:#F2F2F2;border:1px solid #CCCCCC"></div>
<div class="r" style="left:90px;top:147px;width:125px;height:22px;background:#91C9F7;"></div>
<span class="t" style="left:122.5px;top:151.84px;font-size:12px;line-height:12px;color:#000;letter-spacing:-0.516px;">All Tasks</span>
<svg class="ic" style="left:204px;top:152.300px" width="7" height="10" viewBox="0 0 7 10"><path d="M1 1.300L4.700 5L1 8.700" fill="none" stroke="#222" stroke-width="1.050"/></svg>
<div class="r" style="left:118px;top:172px;width:100px;height:1px;background:#D7D7D7;"></div>
<span class="t" style="left:122.5px;top:180.84px;font-size:12px;line-height:12px;color:#000;letter-spacing:-0.338px;">Refresh</span>
<div class="r" style="left:118px;top:201px;width:100px;height:1px;background:#D7D7D7;"></div>
<span class="t" style="left:122.5px;top:209.84px;font-size:12px;line-height:12px;color:#000;letter-spacing:-0.230px;">Help</span>
<div class="r" style="left:215px;top:144px;width:133px;height:25px;background:#F2F2F2;border:1px solid #CCCCCC"></div>
<span class="t" style="left:250px;top:152.24px;font-size:12px;line-height:12px;color:#000;letter-spacing:0.061px;">Import...</span>
</body></html>
